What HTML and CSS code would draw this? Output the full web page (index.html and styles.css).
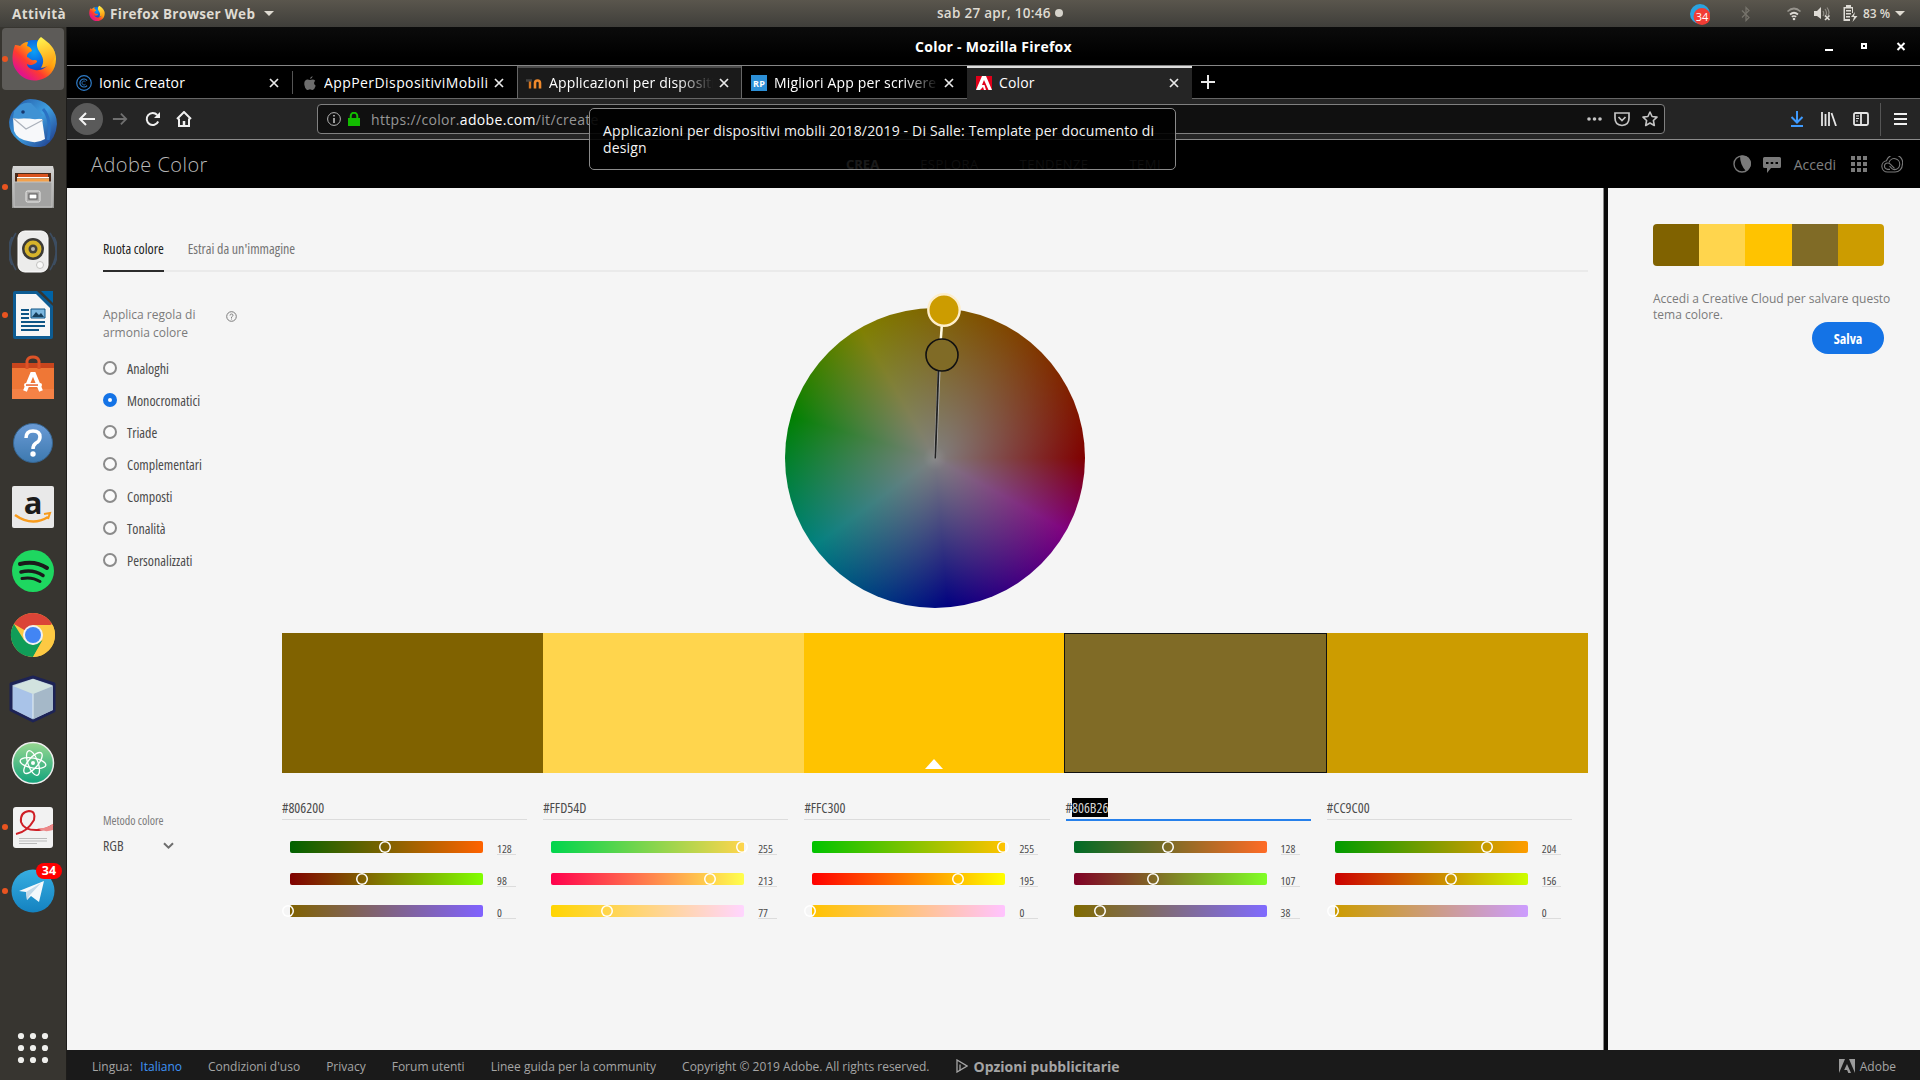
FILE: index.html
```html
<!DOCTYPE html>
<html lang="it">
<head>
<meta charset="utf-8">
<title>Color</title>
<link rel="stylesheet" href="styles.css">
</head>
<body>
<header class="panel">
  <span class="p-act">Attività</span>
  <svg class="p-fox" viewBox="0 0 48 48"><use href="#firefox"/></svg>
  <span class="p-app">Firefox Browser Web</span>
  <i class="caret"></i>
  <div class="clock"><span>sab 27 apr, 10:46</span><i class="clock-dot"></i></div>
  <div class="tray">
    <svg class="t-tg" width="20" height="22" viewBox="0 0 20 22"><circle cx="10" cy="11" r="10" fill="#2ba3df"/><circle cx="12" cy="13.500" r="8.500" fill="#f23c34"/><text x="12" y="18" text-anchor="middle" class="tg-num">34</text></svg>
    <svg class="t-bt" width="10" height="16" viewBox="0 0 10 16" fill="none" stroke="#77746c" stroke-width="1.200"><path d="M1 4.500l7 7L5 14.500V1.500l3 3-7 7"/></svg>
    <svg class="t-wifi" width="16" height="14" viewBox="0 0 16 14" fill="none" stroke="#dedbd5" stroke-width="1.700"><path d="M1.500 4.500Q8-1.500 14.500 4.500" stroke="#97948d"/><path d="M4 7.500q4-3.500 8 0"/><path d="M5.800 9.800q2.200-1.600 4.400 0"/><circle cx="8" cy="12" r="1.300" fill="#dedbd5" stroke="none"/></svg>
    <svg class="t-vol" width="17" height="15" viewBox="0 0 17 15"><path d="M0 5h3l4-4v12L3 10H0z" fill="#dedbd5"/><path d="M9 5q1.500 2.500 0 5M11 3q3 4 0 8M13 1.500q3.500 5 .8 8" fill="none" stroke="#8f8c85" stroke-width="1.200"/><path d="M11 9.500l4.500 4.500m0-4.500L11 14" stroke="#dedbd5" stroke-width="1.600"/></svg>
    <svg class="t-bat" width="15" height="17" viewBox="0 0 15 17"><path d="M3 0h5v2h2v6H9V3.500H2V14h5v2H.5V2H3z" fill="#dedbd5"/><path d="M3 5h5v1.500H3zM3 8h5v1.500H3zM3 11h4v1.500H3zM12 7l-4 5h3l-1.500 5L14.500 11H11z" fill="#dedbd5"/></svg>
    <span class="pct">83 %</span>
    <i class="caret"></i>
  </div>
</header>
<div class="desk">
<nav class="dock">
  <div class="slot active run"><svg viewBox="0 0 48 48">
    <defs>
      <linearGradient id="ff1" x1=".9" y1=".1" x2=".2" y2=".8"><stop offset="0" stop-color="#ffe226"/><stop offset=".4" stop-color="#ff9a0e"/><stop offset=".7" stop-color="#ff3b2f"/><stop offset="1" stop-color="#e31587"/></linearGradient>
      <radialGradient id="ff2" cx=".5" cy=".3" r=".7"><stop offset="0" stop-color="#0aa0f7"/><stop offset=".6" stop-color="#0b57d8"/><stop offset="1" stop-color="#3a1f80"/></radialGradient>
      <linearGradient id="ff3" x1=".3" y1="0" x2=".5" y2="1"><stop offset="0" stop-color="#fff44f"/><stop offset="1" stop-color="#ff980e"/></linearGradient>
      <g id="firefox"><circle cx="25" cy="24" r="19" fill="url(#ff2)"/><path d="M6 10c-3 8-4 18 1 25 5 8 14 12 23 10 10-2 17-10 17-21 0-4-1-7-3-10 1 6-1 10-4 13-2 6-8 9-14 8-5-1-8-3-8-6 3 2 6 1 9-1 2-2 1-3-2-3-3 1-4-2-7-3 0-3 1-4 5-6-1-3-2-4-5-5l1-4c-4 0-6 2-8 4-2-1-4-1-5-1z" fill="url(#ff1)"/><path d="M32 2c-5 4-5 9-2 14 4 6 6 10 2 17 7-1 12-5 14-11 1-9-6-14-14-20z" fill="url(#ff3)"/></g>
    </defs><use href="#firefox"/></svg></div>
  <div class="slot"><svg viewBox="0 0 48 48"><defs><linearGradient id="tb" x1="0" y1="0" x2="1" y2="1"><stop offset="0" stop-color="#1f4f9e"/><stop offset=".5" stop-color="#3f9fe0"/><stop offset="1" stop-color="#1b2f80"/></linearGradient></defs><path d="M10 6q5-6 11-6 12 0 19 7 8 8 8 18-1 15-12 22l-5 1q-14 1-22-7Q0 34 0 23 1 16 4 12z" fill="url(#tb)"/><path d="M4 19l29 1 3 20q-8 5-17 2Q8 40 5 32z" fill="#f7f8fa"/><path d="M4 19l13 11 17-9" fill="none" stroke="#aab0ba" stroke-width="1.200"/><path d="M5 12Q12 2 22 4l12 12q-4 5-10 4l-6-2q-7 3-14 1z" fill="#3f92d4"/><circle cx="14" cy="13" r="1.800" fill="#16386e"/><path d="M34 10q9 10 5 31" fill="none" stroke="#2a72c4" stroke-width="3"/></svg></div>
  <div class="slot run"><svg viewBox="0 0 48 48"><defs><linearGradient id="fl" x1="0" y1="0" x2="0" y2="1"><stop offset="0" stop-color="#d6d6d5"/><stop offset="1" stop-color="#929290"/></linearGradient></defs><path d="M4 3h40l1 4v38H3V7z" fill="url(#fl)"/><path d="M6 10h36v9H6z" fill="#4b2a1a"/><path d="M9 11h30v3H9z" fill="#d9531f"/><path d="M8 14h32v1.500H8z" fill="#fff"/><path d="M8 15.500h32V19H8z" fill="#f3a04a"/><path d="M5 19h38v25H5z" fill="#a3a3a2" stroke="#c4c4c3"/><rect x="17" y="28" width="14" height="11" rx="1.500" fill="#aaa9a8" stroke="#e9e9e8"/><rect x="20" y="31" width="8" height="5" fill="#fff" stroke="#555"/></svg></div>
  <div class="slot"><svg viewBox="0 0 48 48"><path d="M7 6q-12 18 0 37M3 10q-7 14 0 28M41 6q12 18 0 37M45 10q7 14 0 28" fill="none" stroke="#41618a" stroke-width="1.600" opacity=".55"/><rect x="9" y="4" width="30" height="41" rx="7" fill="#ececeb" stroke="#fff"/><circle cx="24" cy="22" r="11" fill="#3b3a36"/><circle cx="24" cy="22" r="8.500" fill="#d6b32a"/><circle cx="24" cy="22" r="4.500" fill="#44423a"/><circle cx="24" cy="22" r="2" fill="#b9b8b0"/><circle cx="31" cy="38" r="3.500" fill="#f9f9f8" stroke="#c2c2c0"/></svg></div>
  <div class="slot run"><svg viewBox="0 0 48 48"><path d="M6 0h22l16 15v31q0 2-2 2H6q-2 0-2-2V2q0-2 2-2z" fill="#0d5c93"/><path d="M32 0h12v12z" fill="#0063a6"/><path d="M7 3h20l14 14v28H7z" fill="#f6f6f6"/><path d="M12 19h8M12 23h8M12 27h8M12 31h24M12 35h24M12 39h18" stroke="#0e5585" stroke-width="2"/><path d="M22 18h14v9H22z" fill="#7db8e0" stroke="#0e5585"/><path d="M23 26l4-5 3 3 2-2 3 4z" fill="#173f5c"/></svg></div>
  <div class="slot"><svg viewBox="0 0 48 48"><path d="M3 8h42v36H3z" fill="#ef7736"/><path d="M3 8h42v5H3z" fill="#c8451d"/><path d="M3 34h42v10H3z" fill="#f58246"/><path d="M18 14V6q1-4 6-4t6 4v8" fill="none" stroke="#dd5327" stroke-width="3"/><path d="M16 36l7-17h2l7 17" fill="none" stroke="#fff" stroke-width="4"/><rect x="15" y="28" width="18" height="4" rx="2" fill="#fff"/><rect x="17" y="29.300" width="12" height="1.500" fill="#e8622c"/></svg></div>
  <div class="slot"><svg viewBox="0 0 48 48"><defs><linearGradient id="hp" x1="0" y1="0" x2="0" y2="1"><stop offset="0" stop-color="#6a9bd6"/><stop offset="1" stop-color="#3d79af"/></linearGradient></defs><circle cx="24" cy="24" r="19.500" fill="url(#hp)" stroke="#36648f"/><path d="M17 19q0-7 7-7t7 6q0 4-4 6-3 2-3 6" fill="none" stroke="#fff" stroke-width="3.500"/><circle cx="24" cy="35" r="2.700" fill="#fff"/></svg></div>
  <div class="slot"><svg viewBox="0 0 48 48"><rect x="3" y="3" width="42" height="42" rx="2" fill="#e9e9e9"/><text x="24" y="31" text-anchor="middle" class="amz">a</text><path d="M6 32q17 12 33 2" fill="none" stroke="#f79b1c" stroke-width="2.500"/><path d="M35 31l6-1-2 6" fill="none" stroke="#f79b1c" stroke-width="2"/></svg></div>
  <div class="slot"><svg viewBox="0 0 48 48"><circle cx="24" cy="24" r="21" fill="#1ed760"/><g fill="none" stroke="#1b1b1b" stroke-linecap="round"><path d="M11 17q15-4 27 4" stroke-width="4"/><path d="M12 25q12-3 22 3.500" stroke-width="3.500"/><path d="M13 31.500q10-2 18 3" stroke-width="3"/></g></svg></div>
  <div class="slot"><svg viewBox="0 0 48 48"><circle cx="24" cy="24" r="22" fill="#fdc943"/><path d="M24 24L4.900 13A22 22 0 0 1 43 13z" fill="#db4437"/><path d="M4.900 13A22 22 0 0 0 24 46l10-17-10 5-9-5z" fill="#109d58"/><path d="M24 14h19.600A22 22 0 0 1 24 46l9.500-17z" fill="#fdc943"/><circle cx="24" cy="24" r="10" fill="#f1f1f1"/><circle cx="24" cy="24" r="8" fill="#4285f4"/></svg></div>
  <div class="slot"><svg viewBox="0 0 48 48"><path d="M24 2l21 7v27L24 46 2 35V9z" fill="#b0c3d9" stroke="#1d2356" stroke-width="3" stroke-linejoin="round"/><path d="M4 11l20 8v25L4 34z" fill="#a9c3e8"/><path d="M44 11l-20 8v25l20-9z" fill="#a5b8c8"/><path d="M24 4l20 7-20 8-20-8z" fill="#d2e3df"/><path d="M24 19v24" stroke="#e6f0f4"/></svg></div>
  <div class="slot"><svg viewBox="0 0 48 48"><defs><linearGradient id="at" x1="0" y1="0" x2="0" y2="1"><stop offset="0" stop-color="#97d890"/><stop offset="1" stop-color="#12a37c"/></linearGradient></defs><circle cx="24" cy="24" r="20.500" fill="url(#at)" stroke="#eee" stroke-width="1.500"/><g fill="none" stroke="#fff" stroke-width="1.300"><ellipse cx="24" cy="24" rx="13" ry="5" transform="rotate(10 24 24)"/><ellipse cx="24" cy="24" rx="13" ry="5" transform="rotate(70 24 24)"/><ellipse cx="24" cy="24" rx="13" ry="5" transform="rotate(130 24 24)"/></g><circle cx="24" cy="24" r="2" fill="#fff"/></svg></div>
  <div class="slot run"><svg viewBox="0 0 48 48"><rect x="4" y="4" width="40" height="41" rx="3" fill="#f2f2f2"/><path d="M7 31q11-2 18-14 2-9-5-9-9 1-8 11 3 9 18 8 8-1 14-5" fill="none" stroke="#cf2027" stroke-width="2"/><path d="M28 25q9 1 16-4v6q-9 3-16-2z" fill="#ed8a8a"/><path d="M10 35.500h28M10 38h28M10 40.500h18" stroke="#bbb"/></svg></div>
  <div class="slot run"><svg viewBox="0 0 48 48"><defs><linearGradient id="tg" x1="0" y1="0" x2="0" y2="1"><stop offset="0" stop-color="#37aee2"/><stop offset="1" stop-color="#1482c0"/></linearGradient></defs><circle cx="24" cy="24" r="21.500" fill="url(#tg)"/><path d="M10 24l25-10-5 21-8-6-4 4-1-8z" fill="#f5f9fc"/><path d="M17 25l15-9-11 12-3 5z" fill="#c3d9e8"/></svg><b class="count">34</b></div>
  <svg class="grid9" width="32" height="32" viewBox="0 0 32 32" fill="#efefec"><circle cx="4" cy="4" r="3.100"/><circle cx="16" cy="4" r="3.100"/><circle cx="28" cy="4" r="3.100"/><circle cx="4" cy="16" r="3.100"/><circle cx="16" cy="16" r="3.100"/><circle cx="28" cy="16" r="3.100"/><circle cx="4" cy="28" r="3.100"/><circle cx="16" cy="28" r="3.100"/><circle cx="28" cy="28" r="3.100"/></svg>
</nav>
<main class="win">
  <div class="titlebar"><b>Color - Mozilla Firefox</b>
    <svg class="wbtn" width="82" height="12" viewBox="0 0 82 12" fill="none" stroke="#fff" stroke-width="2"><path d="M1 9h8"/><path d="M38 3h4v4h-4z"/><path d="M73.500 2l7 7m0-7l-7 7"/></svg>
  </div>
  <div class="tabs">
    <div class="tab"><svg width="16" height="16" viewBox="0 0 16 16" fill="none" stroke="#2f7cc8" stroke-width="1.200"><circle cx="8" cy="8" r="7.300"/><path d="M11 5.500a4 4 0 1 0 0 5" /><path d="M9.500 6.700a2 2 0 1 0 0 2.600" stroke-width=".8"/></svg><span class="tt">Ionic Creator</span><svg class="x" viewBox="0 0 10 10"><path d="M1 1l8 8M9 1L1 9"/></svg></div>
    <div class="tab sep"><svg width="14" height="16" viewBox="0 0 16 16" fill="#6d6d6d"><path d="M11 0q0 3-3 3.500Q8 1 11 0zM8 4.500q4-1.500 6 .8-3 2.700.5 5.700Q13 15.500 11 16q-1.500 0-3-.8-2 1-3.500.8Q2 14 1.500 10 1 5 4.500 4q1.500-.3 3.500.5z"/></svg><span class="tt wide">AppPerDispositiviMobili</span><svg class="x" viewBox="0 0 10 10"><path d="M1 1l8 8M9 1L1 9"/></svg></div>
    <div class="tab hover"><svg width="16" height="16" viewBox="0 0 16 16" fill="none"><path d="M0 5.500h6" stroke="#444" stroke-width="2.500"/><path d="M4 6.500v7" stroke="#d8761f" stroke-width="2.400"/><path d="M9 13.500V8q0-2.500 2.500-2.500T14 8v5.500" stroke="#f08a2c" stroke-width="2.600"/></svg><span class="tt fade">Applicazioni per dispositivi</span><svg class="x" viewBox="0 0 10 10"><path d="M1 1l8 8M9 1L1 9"/></svg></div>
    <div class="tab"><svg width="16" height="16" viewBox="0 0 16 16"><path d="M0 0h16v16H0z" fill="#2c8fd6"/><text x="8" y="11.500" text-anchor="middle" class="rp">RP</text></svg><span class="tt fade">Migliori App per scrivere</span><svg class="x" viewBox="0 0 10 10"><path d="M1 1l8 8M9 1L1 9"/></svg></div>
    <div class="tab sel"><svg width="16" height="16" viewBox="0 0 16 16"><path d="M0 1h16v14H0z" fill="#e1001a"/><path d="M6 1h4l6 14h-3.500L8 5l-2 5h2.500l1.500 5H8l-1-3-3 3H0z" fill="#fff"/></svg><span class="tt">Color</span><svg class="x" viewBox="0 0 10 10"><path d="M1 1l8 8M9 1L1 9"/></svg></div>
    <svg class="plus" width="14" height="14" viewBox="0 0 14 14" stroke="#e8e8e8" stroke-width="2"><path d="M7 0v14M0 7h14"/></svg>
  </div>
  <div class="navbar">
    <div class="back"><svg width="18" height="14" viewBox="0 0 18 14" fill="none" stroke="#f4f4f4" stroke-width="2"><path d="M17 7H2M8 1L2 7l6 6"/></svg></div>
    <svg class="fwd" width="16" height="14" viewBox="0 0 18 14" fill="none" stroke="#6f6f6f" stroke-width="2"><path d="M1 7h15M10 1l6 6-6 6"/></svg>
    <svg class="rel" width="16" height="16" viewBox="0 0 16 16" fill="none" stroke="#efefef" stroke-width="2"><path d="M13.200 10.500a6 6 0 1 1-1-6.500"/><path d="M15 1v6H9z" fill="#efefef" stroke="none"/></svg>
    <svg class="home" width="16" height="16" viewBox="0 0 16 16" fill="none" stroke="#efefef" stroke-width="2"><path d="M1 8l7-7 7 7M3 7.500V15h10V7.500"/><path d="M8 10v5" stroke-width="2.500"/></svg>
    <div class="url">
      <svg width="14" height="14" viewBox="0 0 14 14" fill="none" stroke="#b4b4b4"><circle cx="7" cy="7" r="6.400"/><path d="M7 6v5M7 3v1.600" stroke-width="1.700"/></svg>
      <svg class="lock" width="12" height="14" viewBox="0 0 12 14"><path d="M0 6h12v8H0z" fill="#12bc00"/><path d="M2.700 6V4a3.300 3.300 0 0 1 6.600 0v2" fill="none" stroke="#12bc00" stroke-width="2"/></svg>
      <span class="addr">https://color.<em>adobe.com</em>/it/create</span>
      <svg class="u-dots" width="15" height="4" viewBox="0 0 15 4" fill="#c4c4c4"><circle cx="2" cy="2" r="1.800"/><circle cx="7.500" cy="2" r="1.800"/><circle cx="13" cy="2" r="1.800"/></svg>
      <svg class="u-pk" width="16" height="15" viewBox="0 0 16 15" fill="none" stroke="#c4c4c4" stroke-width="1.700"><path d="M1 1h14v5q0 7-7 7.500Q1 13 1 6z"/><path d="M4.500 5L8 8.500 11.500 5"/></svg>
      <svg class="u-st" width="16" height="16" viewBox="0 0 16 16" fill="none" stroke="#c4c4c4" stroke-width="1.600" stroke-linejoin="round"><path d="M8 1l2.100 4.500 4.900.6-3.600 3.400.9 5L8 12l-4.300 2.500.9-5L1 6.100l4.900-.6z"/></svg>
    </div>
    <svg class="n-dl" width="14" height="16" viewBox="0 0 14 16" fill="none" stroke="#3f9bff" stroke-width="2"><path d="M7 0v11M1.500 6L7 11.500 12.500 6M1 15h12"/></svg>
    <svg class="n-lib" width="16" height="14" viewBox="0 0 16 14" stroke="#e6e6e6" stroke-width="1.800"><path d="M1 0v14M4.500 2v12M8 0v14M10.500 1l4.500 13"/></svg>
    <svg class="n-sb" width="16" height="14" viewBox="0 0 16 14" fill="none" stroke="#e6e6e6" stroke-width="1.800"><rect x="1" y="1" width="14" height="12" rx="1.500"/><path d="M8 1v12"/><path d="M3 4h3M3 6.500h3M3 9h2" stroke-width="1"/></svg>
    <i class="n-sep"></i>
    <svg class="n-mn" width="13" height="14" viewBox="0 0 13 14" stroke="#efefef" stroke-width="2"><path d="M0 2h13M0 7h13M0 12h13"/></svg>
  </div>
  <div class="adobe">
    <span class="brand">Adobe Color</span>
    <nav class="amenu"><b>CREA</b><span>ESPLORA</span><span>TENDENZE</span><span>TEMI</span></nav>
    <svg class="a1" width="18" height="18" viewBox="0 0 18 18"><circle cx="9" cy="9" r="8" fill="none" stroke="#777" stroke-width="1.400"/><path d="M7 1a8 8 0 0 1 6 15Q7 10 7 1z" fill="#7a7a7a"/><path d="M9 1a8 8 0 0 1 4 15z" fill="#7a7a7a"/></svg>
    <svg class="a2" width="18" height="16" viewBox="0 0 18 16"><path d="M1.500 0h15Q18 0 18 1.500v8q0 1.500-1.500 1.500H8l-4 5v-5H1.500Q0 11 0 9.500v-8Q0 0 1.500 0z" fill="#7a7a7a"/><path d="M3 5h2.500v2H3zM7.700 5h2.500v2H7.700zM12.500 5H15v2h-2.500z" fill="#000"/></svg>
    <span class="accedi">Accedi</span>
    <svg class="a3" width="16" height="16" viewBox="0 0 16 16" fill="#7a7a7a"><path d="M0 0h4v4H0zM6 0h4v4H6zM12 0h4v4h-4zM0 6h4v4H0zM6 6h4v4H6zM12 6h4v4h-4zM0 12h4v4H0zM6 12h4v4H6zM12 12h4v4h-4z"/></svg>
    <svg class="a4" width="22" height="17" viewBox="0 0 22 17" fill="none" stroke="#7a7a7a" stroke-width="1.100"><path d="M6.500 16A5.700 5.700 0 0 1 5.500 4.700 8 7.600 0 0 1 21.400 8.500 7.500 7.500 0 0 1 14 16z"/><path d="M9 13.400H6.700a3.200 3.200 0 0 1 0-6.400q1.500 0 2.600 1.200l4.200 4.200"/><path d="M8 6.500a5.500 5.500 0 1 1 5.500 7.100q-1.600 0-2.800-1.200L8.500 10"/></svg>
  </div>
  <div class="page">
    <section class="left">
      <div class="ptabs"><span class="on">Ruota colore</span><span>Estrai da un'immagine</span></div>
      <div class="work">
        <aside class="rules">
          <div class="rlabel"><span>Applica regola di<br>armonia colore</span><svg width="11" height="11" viewBox="0 0 11 11" fill="none" stroke="#7b7b7b"><circle cx="5.500" cy="5.500" r="4.800"/><path d="M4 4.500q0-1.500 1.500-1.500T7 4.300Q7 5.200 5.500 6v1M5.500 7.500v1" stroke-width=".9"/></svg></div>
          <ul>
            <li><i></i>Analoghi</li>
            <li class="ck"><i></i>Monocromatici</li>
            <li><i></i>Triade</li>
            <li><i></i>Complementari</li>
            <li><i></i>Composti</li>
            <li><i></i>Tonalità</li>
            <li><i></i>Personalizzati</li>
          </ul>
        </aside>
        <div class="wheelbox"><div class="wheel"><svg width="300" height="340" viewBox="785 280 300 340"><path d="M935.300 458.500L939 371" stroke="#b0b0b0" stroke-width="3"/><path d="M935.300 458.500L938.500 371" stroke="#222" stroke-width="1.800"/><path d="M940.800 339l1-13" stroke="#fffbe6" stroke-width="2.500"/><circle cx="944" cy="310" r="15.700" fill="#cc9c00" stroke="#fdeecb" stroke-width="2.400"/><circle cx="942" cy="355" r="16" fill="#806b26" stroke="#111" stroke-width="1.600"/></svg></div></div>
      </div>
      <div class="swatches"><i class="c1"></i><i class="c2"></i><i class="c3"></i><i class="c4"></i><i class="c5"></i></div>
      <div class="bottom">
        <aside class="mode"><span>Metodo colore</span><div class="mv"><span>RGB</span><svg width="11" height="8" viewBox="0 0 11 8" fill="none" stroke="#6e6e6e" stroke-width="2"><path d="M1 1.200l4.500 4.500L10 1.200"/></svg></div></aside>
        <div class="cols">
          <div class="col"><div class="hex">#806200</div>
            <div class="sl"><div class="bar" style="--a:#006200;--b:#ff6200;--v:128"><i></i></div><span>128</span></div>
            <div class="sl"><div class="bar" style="--a:#800000;--b:#80ff00;--v:98"><i></i></div><span>98</span></div>
            <div class="sl"><div class="bar" style="--a:#806200;--b:#8062ff;--v:0"><i></i></div><span>0</span></div></div>
          <div class="col"><div class="hex">#FFD54D</div>
            <div class="sl"><div class="bar" style="--a:#00d54d;--b:#ffd54d;--v:255"><i></i></div><span>255</span></div>
            <div class="sl"><div class="bar" style="--a:#ff004d;--b:#ffff4d;--v:213"><i></i></div><span>213</span></div>
            <div class="sl"><div class="bar" style="--a:#ffd500;--b:#ffd5ff;--v:77"><i></i></div><span>77</span></div></div>
          <div class="col"><div class="hex">#FFC300</div>
            <div class="sl"><div class="bar" style="--a:#00c300;--b:#ffc300;--v:255"><i></i></div><span>255</span></div>
            <div class="sl"><div class="bar" style="--a:#ff0000;--b:#ffff00;--v:195"><i></i></div><span>195</span></div>
            <div class="sl"><div class="bar" style="--a:#ffc300;--b:#ffc3ff;--v:0"><i></i></div><span>0</span></div></div>
          <div class="col edit"><div class="hex">#<mark>806B26</mark></div>
            <div class="sl"><div class="bar" style="--a:#006b26;--b:#ff6b26;--v:128"><i></i></div><span>128</span></div>
            <div class="sl"><div class="bar" style="--a:#800026;--b:#80ff26;--v:107"><i></i></div><span>107</span></div>
            <div class="sl"><div class="bar" style="--a:#806b00;--b:#806bff;--v:38"><i></i></div><span>38</span></div></div>
          <div class="col"><div class="hex">#CC9C00</div>
            <div class="sl"><div class="bar" style="--a:#009c00;--b:#ff9c00;--v:204"><i></i></div><span>204</span></div>
            <div class="sl"><div class="bar" style="--a:#cc0000;--b:#ccff00;--v:156"><i></i></div><span>156</span></div>
            <div class="sl"><div class="bar" style="--a:#cc9c00;--b:#cc9cff;--v:0"><i></i></div><span>0</span></div></div>
        </div>
      </div>
    </section>
    <aside class="right">
      <div class="mini"><i class="c1"></i><i class="c2"></i><i class="c3"></i><i class="c4"></i><i class="c5"></i></div>
      <p>Accedi a Creative Cloud per salvare questo<br>tema colore.</p>
      <button>Salva</button>
    </aside>
  </div>
  <footer class="foot">
    <span>Lingua:</span><span class="it">Italiano</span><span>Condizioni d'uso</span><span>Privacy</span><span>Forum utenti</span><span>Linee guida per la community</span><span>Copyright © 2019 Adobe. All rights reserved.</span>
    <svg width="12" height="14" viewBox="0 0 12 14" fill="none" stroke="#a5a5a5" stroke-width="1.300"><path d="M1 1v12L11 7z"/><path d="M4 5.500v6" /></svg>
    <b>Opzioni pubblicitarie</b>
    <svg class="alogo" width="16" height="14" viewBox="0 0 16 14" fill="#9b9b9b"><path d="M0 0h6L0 14zM10 0h6v14zM8 5l4 9H9.300l-1.200-3H5.200z"/></svg>
    <span class="adb">Adobe</span>
  </footer>
</main>
</div>
<div class="tip">Applicazioni per dispositivi mobili 2018/2019 - Di Salle: Template per documento di<br>design</div>
</body>
</html>
```
FILE: styles.css
```css
* { box-sizing: border-box; }
html, body { margin: 0; height: 100%; }
body { width: 1920px; height: 1080px; overflow: hidden; display: flex; flex-direction: column; font-family: "Open Sans", "Noto Sans", sans-serif; position: relative; background: #000; }
svg { flex: none; display: block; }
i { font-style: normal; }

/* system panel */
.panel { height: 27px; flex: none; display: flex; align-items: center; position: relative; padding-left: 12px; background: linear-gradient(#5a564d, #3f3e3a); color: #dfdbd2; font-size: 13.5px; font-weight: 600; white-space: nowrap; }
.p-act { width: 76px; font-weight: 700; letter-spacing: .4px; }
.p-fox { width: 17px; height: 17px; margin-right: 5px; }
.p-app { width: 148px; margin-right: 6px; font-weight: 700; letter-spacing: .3px; }
.caret { border: 5px solid transparent; border-top-color: #dfdbd2; border-bottom: 0; width: 0; height: 0; }
.clock { position: absolute; left: 937px; top: 0; line-height: 26px; display: flex; align-items: center; gap: 4px; letter-spacing: .27px; }
.clock-dot { width: 8px; height: 8px; border-radius: 50%; background: #d5d2ca; }
.tray { margin-left: auto; display: flex; align-items: center; padding-right: 15px; }
.tg-num { font: 11px "Open Sans", sans-serif; fill: #fff; }
.t-bt { margin-left: 31px; }
.t-wifi { margin-left: 35px; }
.t-vol { margin-left: 12px; }
.t-bat { margin-left: 12px; }
.pct { width: 28px; margin: 0 4px 0 5px; font-size: 12px; }

.desk { flex: 1; display: flex; min-height: 0; }

/* launcher */
.dock { width: 67px; flex: none; background: #373530; border-right: 1px solid #1d1c1a; display: flex; flex-direction: column; position: relative; }
.slot { height: 64px; flex: none; position: relative; display: flex; align-items: center; justify-content: center; }
.slot svg { width: 48px; height: 48px; }
.slot.active { background: #5d5b58; margin: 1px 2px; height: 62px; border-radius: 4px; }
.slot.run::before { content: ""; position: absolute; left: 2px; top: 29px; width: 6px; height: 6px; border-radius: 50%; background: #e95420; }
.slot.active::before { left: 0; top: 28px; }
.amz { font: bold 31px "Open Sans", sans-serif; fill: #1c1c1c; }
.count { position: absolute; left: 36px; top: 4px; width: 26px; height: 16px; border-radius: 8px; background: #f00; color: #fff; font: bold 12.5px/16px "Open Sans", sans-serif; text-align: center; }
.grid9 { margin: 109px 0 0 17px; }

/* browser window */
.win { flex: 1; display: flex; flex-direction: column; min-width: 0; }
.titlebar { height: 39px; flex: none; background: linear-gradient(#0b0b0b, #000 80%); border-bottom: 1px solid #868686; color: #fff; font-size: 14px; line-height: 39px; text-align: center; position: relative; letter-spacing: .25px; }
.wbtn { position: absolute; right: 14px; top: 14px; }
.tabs { height: 33px; flex: none; background: #000; border-bottom: 1px solid #666; display: flex; align-items: stretch; }
.tab { width: 225px; height: 33px; display: flex; align-items: center; padding: 1px 13px 0 9px; color: #fff; font-size: 14px; letter-spacing: .15px; border-bottom: 1px solid #666; }
.tab .x { width: 10px; height: 10px; stroke: #e9e9e9; stroke-width: 1.7; margin-left: auto; }
.tab.sep { background: linear-gradient(#555, #555) 0 5px / 1px 23px no-repeat; padding-left: 11px; }
.tab.hover { background: #1a1a1a; border-left: 1px solid #666; border-right: 1px solid #666; box-shadow: inset 0 2px #4c4c4c; padding-left: 8px; padding-right: 12px; }
.tab.sel { background: #252525; box-shadow: inset 0 2px #ddd; border-bottom-color: #252525; }
.tt { margin-left: 7px; width: 166px; overflow: hidden; white-space: nowrap; }
.tt.wide { letter-spacing: .42px; }
.tt.fade { -webkit-mask: linear-gradient(90deg, #000 78%, transparent 99%); mask: linear-gradient(90deg, #000 78%, transparent 99%); }
.rp { font: bold 9px "Open Sans", sans-serif; fill: #fff; }
.plus { margin: 9px 0 0 9px; }

.navbar { height: 41px; flex: none; background: #252525; border-bottom: 1px solid #8a8a8a; display: flex; align-items: center; padding: 0 13px 0 4px; }
.back { width: 32px; height: 32px; border-radius: 50%; background: #5a5a5a; display: flex; align-items: center; justify-content: center; }
.fwd { margin-left: 9px; }
.rel { margin-left: 17px; }
.home { margin-left: 15px; }
.url { margin-left: 125px; width: 1348px; height: 30px; border: 1px solid #808080; border-radius: 4px; background: #101010; display: flex; align-items: center; padding: 0 6px 0 9px; }
.lock { margin: 0 11px 0 7px; }
.addr { color: #979797; font-size: 14px; white-space: nowrap; letter-spacing: .33px; }
.addr em { color: #fff; font-style: normal; }
.u-dots { margin-left: auto; }
.u-pk { margin: 0 12px; }
.n-dl { margin-left: auto; }
.n-lib { margin-left: 17px; }
.n-sb { margin-left: 16px; }
.n-sep { width: 1px; height: 33px; background: #555; margin: 0 13px 0 11px; }

.adobe { height: 48px; flex: none; background: #000; display: flex; align-items: center; padding: 0 17px 0 24px; position: relative; color: #808080; }
.brand { font-size: 20px; font-weight: 300; font-stretch: 90%; letter-spacing: .45px; color: #b8b8b8; line-height: 48px; margin-top: 1px; }
.amenu { position: absolute; left: 779px; top: 14px; display: flex; gap: 41px; font-size: 13px; line-height: 20px; color: #8a8a8a; letter-spacing: .45px; }
.amenu b { color: #fff; letter-spacing: 0; }
.a1 { margin-left: auto; }
.a2 { margin: 1px 13px 0 12px; }
.accedi { font-size: 14px; font-stretch: 92%; margin-top: 1px; }
.a3 { margin: 0 14px 0 15px; }

/* page */
.page { flex: 1; display: flex; min-height: 0; background: #f5f5f5; font-stretch: 86.5%; }
.left { width: 1537px; flex: none; padding: 36px 16px 0 36px; }
.ptabs { height: 48px; border-bottom: 2px solid #eaeaea; display: flex; gap: 24px; font-size: 14px; color: #747474; line-height: 49px; }
.ptabs > span { height: 48px; white-space: nowrap; }
.ptabs .on { color: #222; border-bottom: 2px solid #2c2c2c; }
.work { height: 361px; display: flex; }
.rules { width: 180px; padding-top: 34px; }
.rlabel { display: flex; justify-content: space-between; width: 134px; font-size: 12px; font-stretch: 89%; line-height: 18px; color: #7b7b7b; }
.rlabel svg { margin-top: 5px; }
.rules ul { list-style: none; margin: 11px 0 0; padding: 0; }
.rules li { height: 32px; display: flex; align-items: center; font-size: 14px; line-height: 19px; color: #4b4b4b; padding-bottom: 1px; }
.rules li i { width: 14px; height: 14px; border-radius: 50%; border: 2px solid #8b8b8b; margin: -1px 10px 0 0; background: #fafafa; }
.rules li.ck i { border: 5px solid #1473e6; background: #fff; }
.wheelbox { flex: 1; }
.wheel { width: 300px; height: 300px; border-radius: 50%; margin: 36px 0 0 502px; background: radial-gradient(closest-side, #8a8a8a, rgba(128,128,128,.92) 8%, rgba(128,128,128,0) 100%), conic-gradient(from 90deg, #800000, #800080 29deg, #000080 85deg, #008080 144deg, #008000 196deg, #808000 240deg, #804000 305deg, #800000); }
.wheel svg { position: relative; top: -28px; }
.swatches { display: flex; height: 140px; margin-left: 179px; }
.swatches i { flex: 1; }
.c1 { background: #806200; } .c2 { background: #ffd54d; } .c3 { background: #ffc300; } .c4 { background: #806b26; } .c5 { background: #cc9c00; }
.swatches .c3 { display: flex; align-items: flex-end; justify-content: center; padding-bottom: 4px; }
.swatches .c3::after { content: ""; border: 9px solid transparent; border-bottom: 10px solid #fff; border-top: 0; }
.swatches .c4 { border: 1px solid #111; }
.bottom { display: flex; }
.mode { width: 179px; padding-top: 39px; color: #7b7b7b; font-size: 12px; line-height: 18px; }
.mv { display: flex; align-items: center; justify-content: space-between; width: 71px; font-size: 14px; color: #4b4b4b; margin-top: 7px; }
.cols { flex: 1; display: flex; }
.col { flex: 1; padding-right: 16px; }
.hex { height: 47px; padding-top: 22px; border-bottom: 1px solid #dcdcdc; font-size: 14px; line-height: 26px; color: #4b4b4b; margin-bottom: 21px; }
.hex mark { background: #000; color: #d5d5d5; padding: 0; }
.edit .hex { border-bottom: 2px solid #2680eb; height: 48px; margin-bottom: 20px; }
.sl { display: flex; height: 32px; padding-left: 8px; }
.bar { width: 193px; height: 12px; border-radius: 2px; background: linear-gradient(90deg, var(--a), var(--b)); position: relative; margin-right: 14px; }
.bar i { position: absolute; top: 0; left: calc(193px * var(--v) / 255 - 8px); width: 12px; height: 12px; border-radius: 50%; box-shadow: inset 0 0 0 1.5px #fff; }
.sl span { width: 19px; height: 14px; border-bottom: 1px solid #dcdcdc; font-size: 11.5px; font-stretch: 80%; line-height: 15px; color: #4b4b4b; }

.right { flex: 1; min-width: 0; border-left: 4px solid #0a0a0a; padding: 36px 36px 0 45px; box-shadow: -1px 0 #888; display: flex; flex-direction: column; }
.mini { width: 231px; height: 42px; display: flex; border-radius: 4px; overflow: hidden; }
.mini i { flex: 1; }
.right p { margin: 25px 0 0; font-size: 12px; font-stretch: 88.6%; line-height: 16px; color: #7b7b7b; white-space: nowrap; }
.right button { align-self: flex-end; width: 72px; height: 32px; border: 0; border-radius: 16px; background: #1473e6; color: #fff; font: bold 14px "Open Sans", sans-serif; font-stretch: 86%; margin-top: -1px; padding: 0; }

.foot { height: 30px; flex: none; background: #1a1a1a; display: flex; align-items: center; padding: 2px 24px 0 25px; font-size: 12px; font-stretch: 93%; color: #a5a5a5; white-space: nowrap; }
.foot > span { margin-right: 26px; }
.foot > span:first-child { margin-right: 8px; }
.foot .it { color: #3f94f7; }
.foot b { font-size: 14px; font-stretch: 97%; margin-left: 6px; }
.alogo { margin: 0 5px 0 auto; }
.foot .adb { margin-right: 0; }

.tip { position: absolute; left: 589px; top: 108px; width: 587px; height: 62px; border: 1px solid #8a8a8a; border-radius: 5px; background: rgba(0,0,0,.9); color: #f4f4f4; font-size: 14px; letter-spacing: .16px; line-height: 17px; padding: 13px 13px; white-space: nowrap; }
```
